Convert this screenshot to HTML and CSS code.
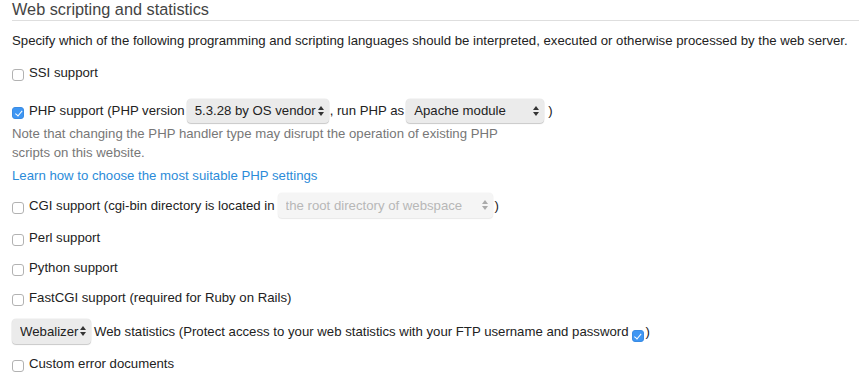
FILE: index.html
```html
<!DOCTYPE html>
<html lang="en">

<head>
    <title>web_scripting</title>
    <link rel="stylesheet" href="styles.css">
</head>

<body>
    <div class="panel">
        <h2 class="title">Web scripting and statistics</h2>
        <p class="intro">Specify which of the following programming and scripting languages should be interpreted, executed or otherwise processed by the web server.</p>

        <label class="row row-ssi"><input type="checkbox" class="check"><span>SSI support</span></label>

        <div class="row row-php tall">
            <label class="inline"><input type="checkbox" class="check" checked><span>PHP support (PHP version</span></label>
            <span class="select sel-version">
                <select><option>5.3.28 by OS vendor</option></select>
                <svg class="arrows" viewBox="0 0 6 10"><polygon points="0,4 3,0 6,4" /><polygon points="0,6 3,10 6,6" /></svg>
            </span>
            <span>, run PHP as</span>
            <span class="select sel-handler">
                <select><option>Apache module</option></select>
                <svg class="arrows" viewBox="0 0 6 10"><polygon points="0,4 3,0 6,4" /><polygon points="0,6 3,10 6,6" /></svg>
            </span>
            <span>)</span>
        </div>

        <p class="note">Note that changing the PHP handler type may disrupt the operation of existing PHP scripts on this website.</p>
        <a class="link" href="#">Learn how to choose the most suitable PHP settings</a>

        <div class="row row-cgi tall">
            <label class="inline"><input type="checkbox" class="check"><span>CGI support (cgi-bin directory is located in</span></label>
            <span class="select sel-cgi disabled">
                <select disabled><option>the root directory of webspace</option></select>
                <svg class="arrows" viewBox="0 0 6 10"><polygon points="0,4 3,0 6,4" /><polygon points="0,6 3,10 6,6" /></svg>
            </span>
            <span>)</span>
        </div>

        <label class="row row-perl"><input type="checkbox" class="check"><span>Perl support</span></label>
        <label class="row"><input type="checkbox" class="check"><span>Python support</span></label>
        <label class="row"><input type="checkbox" class="check"><span>FastCGI support (required for Ruby on Rails)</span></label>

        <div class="row tall">
            <span class="select sel-stats">
                <select><option>Webalizer</option></select>
                <svg class="arrows" viewBox="0 0 6 10"><polygon points="0,4 3,0 6,4" /><polygon points="0,6 3,10 6,6" /></svg>
            </span>
            <span>Web statistics (Protect access to your web statistics with your FTP username and password</span>
            <input type="checkbox" class="check check-pass" checked>
            <span>)</span>
        </div>

        <label class="row row-errors"><input type="checkbox" class="check"><span>Custom error documents</span></label>
    </div>
</body>

</html>
```

FILE: styles.css
```css
body {
    margin: 0;
    padding: 0 0 0 12px;
    background-color: #fff;
    color: #222;
    font-family: "Liberation Sans", Arial, Helvetica, sans-serif;
    font-size: 13.2px;
    line-height: 18px;
}

.title {
    margin: 0;
    padding-bottom: 2px;
    border-bottom: 1px solid #dedede;
    font-size: 16.3px;
    font-weight: normal;
    line-height: 18px;
    color: #444;
}

.intro {
    margin: 11px 0 0;
}

.row {
    display: flex;
    align-items: center;
    min-height: 18px;
    margin-top: 12px;
}

.row.tall {
    min-height: 25px;
}

.row-ssi {
    margin-top: 14px;
}

.row-php {
    margin-top: 16px;
}

.row-cgi {
    margin-top: 8px;
}

.row-perl,
.row-errors {
    margin-top: 11px;
}

.inline {
    display: flex;
    align-items: center;
}

.check {
    appearance: none;
    position: relative;
    box-sizing: border-box;
    width: 12px;
    height: 12px;
    margin: 4px 5px 0 0;
    border: 1px solid #b2b2b2;
    border-radius: 3px;
    background-color: #fff;
    flex-shrink: 0;
}

.check:checked {
    background-color: #3e96f3;
    border-color: #3a8be3;
}

.check:checked::after {
    content: "";
    position: absolute;
    left: 3.5px;
    top: 1px;
    width: 2.5px;
    height: 5.5px;
    border-right: 1.5px solid #fff;
    border-bottom: 1.5px solid #fff;
    transform: rotate(40deg);
}

.check-pass {
    margin: 8px 2px 0 3px;
}

.select {
    position: relative;
    display: inline-flex;
    flex-shrink: 0;
}

.select select {
    appearance: none;
    box-sizing: border-box;
    width: 100%;
    height: 25px;
    margin: 0;
    padding: 0 8px 0 8px;
    border: none;
    border-radius: 4px;
    background-color: #ebebeb;
    box-shadow: 0 1px 1px rgba(0, 0, 0, 0.18), 0 0 0 0.5px rgba(0, 0, 0, 0.08);
    color: #222;
    font-family: inherit;
    font-size: 13.2px;
}

.select .arrows {
    position: absolute;
    right: 5px;
    top: 7px;
    width: 6px;
    height: 10px;
    fill: #333;
}

.select.disabled select {
    background-color: #f1f1f1;
    box-shadow: 0 1px 1px rgba(0, 0, 0, 0.1), 0 0 0 0.5px rgba(0, 0, 0, 0.05);
    color: #999;
}

.select.disabled .arrows {
    fill: #aaa;
}

.sel-version {
    width: 142px;
    margin: 0 1px 0 2px;
}

.sel-handler {
    width: 138px;
    margin: 0 4px 0 2px;
}

.sel-cgi {
    width: 215px;
    margin: 0 2px 0 3px;
}

.sel-stats {
    width: 79px;
    margin-right: 3px;
}

.row-php .select select {
    height: 24px;
}

.note {
    max-width: 505px;
    margin: 1px 0 0;
    line-height: 19px;
    color: #777;
}

.link {
    display: block;
    margin-top: 5px;
    color: #2b8bd9;
    text-decoration: none;
}
```
